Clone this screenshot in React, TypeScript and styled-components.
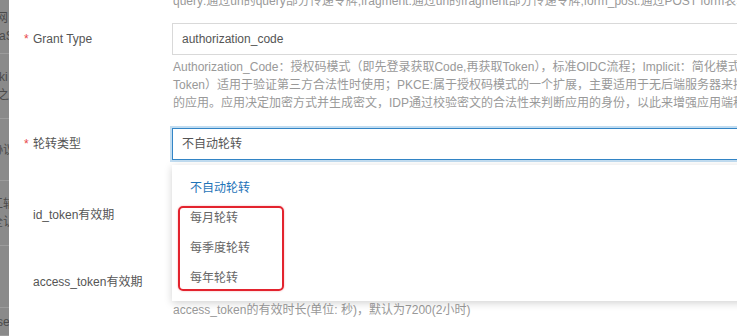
import React from "react";
import styled, { createGlobalStyle } from "styled-components";

const Global = createGlobalStyle`
  html, body { margin: 0; padding: 0; background: #fff; }
  body {
    width: 737px; height: 336px; overflow: hidden;
    font-family: "Liberation Sans", "Noto Sans CJK SC", sans-serif;
  }
`;

const Page = styled.div`
  display: flex;
  width: 737px;
  height: 336px;
  overflow: hidden;
`;

const Backdrop = styled.div`
  flex: none;
  width: 9px;
  height: 336px;
  background: #8a8a8a;
  overflow: hidden;
  display: flex;
  flex-direction: column;
`;

const BackCell = styled.div<{ $h: number }>`
  flex: none;
  height: ${(p) => p.$h}px;
  border-bottom: 1px solid #9c9c9c;
  box-sizing: border-box;
  display: flex;
  flex-direction: column;
  justify-content: center;
  font-size: 12px;
  line-height: 18px;
  color: #4a4a4a;
  white-space: nowrap;
`;

const BackText = styled.span<{ $shift: number }>`
  display: block;
  margin-left: ${(p) => p.$shift}px;
`;

const Modal = styled.div`
  flex: none;
  width: 1000px;
  background: #fff;
  position: relative;
`;

const Body = styled.div`
  margin-top: -8px;
  display: flex;
  flex-direction: column;
`;

const TopHelp = styled.div`
  margin-left: 164px;
  margin-bottom: 13px;
  font-size: 12px;
  line-height: 18px;
  color: #999;
  white-space: nowrap;
`;

const Row = styled.div<{ $mb: number }>`
  display: flex;
  margin-bottom: ${(p) => p.$mb}px;
`;

const Label = styled.div`
  flex: none;
  width: 139px;
  padding-left: 24px;
  height: 32px;
  line-height: 32px;
  font-size: 12px;
  color: #555;
  white-space: nowrap;
`;

const Star = styled.span`
  display: inline-block;
  width: 9px;
  margin-left: -9px;
  color: #e8474a;
  font-size: 12px;
`;

const Control = styled.div`
  flex: none;
  width: 800px;
  position: relative;
  display: flex;
  flex-direction: column;
`;

const Input = styled.div<{ $focused?: boolean }>`
  height: 32px;
  box-sizing: border-box;
  border: 1px solid ${(p) => (p.$focused ? "#3385c6" : "#d9d9d9")};
  box-shadow: ${(p) => (p.$focused ? "0 0 0 2px #c2ddf1" : "none")};
  padding-left: 9px;
  line-height: 30px;
  font-size: 12px;
  color: #555;
  background: #fff;
`;

const Help = styled.div`
  margin-top: 3px;
  font-size: 12px;
  line-height: 18px;
  color: #999;
  white-space: nowrap;
  padding-left: 1px;
`;

const Dropdown = styled.div`
  position: absolute;
  top: 37px;
  left: 0;
  width: 800px;
  padding: 8px 0 8px;
  background: #fff;
  box-shadow: 0 2px 8px rgba(0, 0, 0, 0.18);
  z-index: 5;
`;

const Option = styled.div<{ $active?: boolean }>`
  height: 30px;
  line-height: 30px;
  padding-left: 18px;
  font-size: 12px;
  color: ${(p) => (p.$active ? "#1f74b8" : "#666")};
`;

const Mark = styled.div`
  position: absolute;
  left: 6px;
  top: 41px;
  width: 106px;
  height: 85px;
  box-sizing: border-box;
  border: 2.5px solid #e3232e;
  border-radius: 5px;
  box-shadow: 0 0 2px rgba(227, 35, 46, 0.4);
  pointer-events: none;
`;

const backCells: { h: number; lines: { t: string; s: number }[] }[] = [
  { h: 54, lines: [{ t: "网", s: -4 }, { t: "aS", s: -1 }] },
  { h: 65, lines: [{ t: "ki", s: -1 }, { t: "之", s: -3 }] },
  { h: 62, lines: [{ t: "协议", s: -9 }] },
  { h: 65, lines: [{ t: "工辅", s: -9 }, { t: "全认", s: -9 }] },
  { h: 62, lines: [] },
  { h: 28, lines: [{ t: "ser", s: -3 }] },
];

export default function App() {
  return (
    <>
      <Global />
      <Page>
        <Backdrop>
          {backCells.map((c, i) => (
            <BackCell key={i} $h={c.h}>
              {c.lines.map((l, j) => (
                <BackText key={j} $shift={l.s}>
                  {l.t}
                </BackText>
              ))}
            </BackCell>
          ))}
        </Backdrop>
        <Modal>
          <Body>
            <TopHelp>
              query:通过url的query部分传递令牌;fragment:通过url的fragment部分传递令牌;form_post:通过POST form表单传递令牌
            </TopHelp>
            <Row $mb={16}>
              <Label>
                <Star>*</Star>Grant Type
              </Label>
              <Control>
                <Input>authorization_code</Input>
                <Help>
                  <div>
                    Authorization_Code：授权码模式（即先登录获取Code,再获取Token），标准OIDC流程；Implicit：简化模式（不通过授权码直接获取Access
                  </div>
                  <div>
                    Token）适用于验证第三方合法性时使用；PKCE:属于授权码模式的一个扩展，主要适用于无后端服务器来接收处理授权码
                  </div>
                  <div>
                    的应用。应用决定加密方式并生成密文，IDP通过校验密文的合法性来判断应用的身份，以此来增强应用端程序的安全性
                  </div>
                </Help>
              </Control>
            </Row>
            <Row $mb={18}>
              <Label>
                <Star>*</Star>轮转类型
              </Label>
              <Control>
                <Input $focused>不自动轮转</Input>
                <Help>轮转周期</Help>
                <Dropdown>
                  <Option $active>不自动轮转</Option>
                  <Option>每月轮转</Option>
                  <Option>每季度轮转</Option>
                  <Option>每年轮转</Option>
                  <Mark />
                </Dropdown>
              </Control>
            </Row>
            <Row $mb={14}>
              <Label>id_token有效期</Label>
              <Control>
                <Input>7200</Input>
                <Help>id_token的有效时长(单位: 秒)，默认为7200(2小时)</Help>
              </Control>
            </Row>
            <Row $mb={16}>
              <Label>access_token有效期</Label>
              <Control>
                <Input>7200</Input>
                <Help>access_token的有效时长(单位: 秒)，默认为7200(2小时)</Help>
              </Control>
            </Row>
          </Body>
        </Modal>
      </Page>
    </>
  );
}
